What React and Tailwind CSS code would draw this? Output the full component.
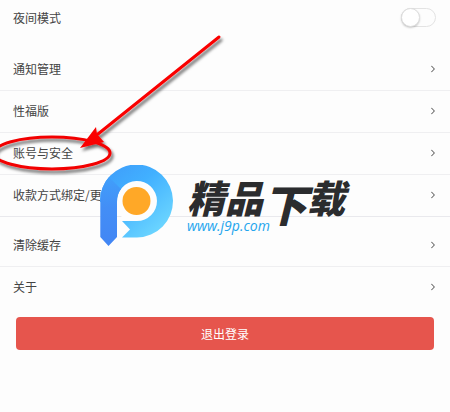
import React, { useState } from 'react';

const GENERAL_ITEMS = ['通知管理', '性福版', '账号与安全', '收款方式绑定/更改'];
const SYSTEM_ITEMS = ['清除缓存', '关于'];

const Chevron = () => (
  <svg className="h-2 w-1" viewBox="0 0 4 8" fill="none" stroke="#444" strokeWidth="1">
    <path d="M0.3 0.8 L3.4 4 L0.3 7.2" />
  </svg>
);

const SettingRow = ({ label }) => (
  <li className="border-b border-[#efeff1] last:border-transparent">
    <a href="#" className="flex h-[41px] items-center justify-between pr-[15px] pb-px pl-[13px]">
      <span>{label}</span>
      <Chevron />
    </a>
  </li>
);

const Annotation = () => (
  <svg className="pointer-events-none absolute top-0 left-0 h-[190px] w-[240px]" viewBox="0 0 240 190">
    <defs>
      <filter id="mark-shadow" x="-10%" y="-10%" width="120%" height="130%">
        <feDropShadow dx="2" dy="3" stdDeviation="1.8" floodColor="#000" floodOpacity="0.55" />
      </filter>
    </defs>
    <g filter="url(#mark-shadow)">
      <ellipse cx="52" cy="153" rx="58" ry="16" fill="none" stroke="#f20000" strokeWidth="3" />
      <path d="M219 37 L98 134" stroke="#fa0000" strokeWidth="3" strokeLinecap="round" />
      <path d="M80 148 L96 127 L97 134 L104 142 Z" fill="#fa0000" />
    </g>
  </svg>
);

const BrandLogo = () => (
  <svg className="h-[82px] w-[74px] shrink-0" viewBox="0 0 74 82">
    <defs>
      <linearGradient id="ring" x1="0.1" y1="0.1" x2="0.8" y2="0.9">
        <stop offset="0" stopColor="#3f9ffb" />
        <stop offset="0.4" stopColor="#41b0ff" />
        <stop offset="1" stopColor="#6ad4ff" />
      </linearGradient>
      <linearGradient id="stem" x1="0" y1="0" x2="0" y2="1">
        <stop offset="0" stopColor="#409ffb" />
        <stop offset="0.45" stopColor="#438ef6" />
        <stop offset="1" stopColor="#4386f4" />
      </linearGradient>
    </defs>
    <circle cx="37" cy="36" r="22" fill="#fdfdfd" />
    <path d="M0 37 A36.500 36.500 0 1 1 37 72.500 H22 L30 64.500 L22 56 H37 A20 20 0 1 0 17 37 Z" fill="url(#ring)" />
    <path d="M0.300 34 Q1 21 9 12 L21 24 Q17 29 17 37 V72 L8.500 81 L0.300 72 Z" fill="url(#stem)" />
    <circle cx="36.500" cy="36" r="14" fill="#ffa827" />
  </svg>
);

const Watermark = () => (
  <div className="pointer-events-none absolute top-[165px] left-[100px] flex">
    <BrandLogo />
    <div className="pt-[12px] pl-[13px]">
      <div className="flex h-10 items-start text-[38px] leading-10 font-black text-[#2b2c2e] italic">
        <span>精品</span>
        <span className="text-[44px] leading-[52px]">下</span>
        <span>载</span>
      </div>
      <div className="pt-px font-['Open_Sans'] text-[14px] leading-4 text-[#24a5ed] italic">www.j9p.com</div>
    </div>
  </div>
);

export default function App() {
  const [nightMode, setNightMode] = useState(false);

  return (
    <main className="relative min-h-screen overflow-hidden bg-[#fdfdfd] font-['Noto_Sans_CJK_SC',sans-serif] text-[12px] text-[#444]">
      <label className="flex h-[35px] items-center justify-between pr-[14px] pl-[13px]">
        <span>夜间模式</span>
        <span className="relative flex">
          <input
            type="checkbox"
            role="switch"
            checked={nightMode}
            onChange={(e) => setNightMode(e.target.checked)}
            className="peer h-[19px] w-[35px] appearance-none rounded-full border border-[#e3e3e3] bg-[#fdfdfd] checked:bg-[#e6554d]"
          />
          <span className="absolute top-0 left-0 size-[19px] rounded-full border border-[#dedede] bg-white shadow-[0_1px_2px_#0003] peer-checked:left-4" />
        </span>
      </label>

      <ul className="mt-[14px]">
        {GENERAL_ITEMS.map(label => <SettingRow key={label} label={label} />)}
      </ul>
      <div className="-mt-px border-t border-[#e9e9ed]" />
      <ul className="mt-2">
        {SYSTEM_ITEMS.map(label => <SettingRow key={label} label={label} />)}
      </ul>

      <div className="px-4 pt-2">
        <button type="button" className="h-[33px] w-full rounded bg-[#e6554d] text-white">
          退出登录
        </button>
      </div>

      <Annotation />
      <Watermark />
    </main>
  );
}
